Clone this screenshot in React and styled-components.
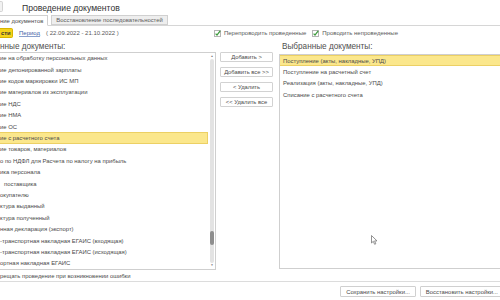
import React from 'react';
import styled, { createGlobalStyle } from 'styled-components';

const GlobalStyle = createGlobalStyle`
html, body {
  margin: 0;
  padding: 0;
  background: #ffffff;
}
#root {
  width: 500px;
  height: 300px;
  overflow: hidden;
}
* { box-sizing: border-box; }
`;

const leftDocs = [
  { text: 'ие на обработку персональных данных' },
  { text: 'ие депонированной зарплаты' },
  { text: 'ие кодов маркировки ИС МП' },
  { text: 'ие материалов из эксплуатации' },
  { text: 'ие НДС' },
  { text: 'ие НМА' },
  { text: 'ие ОС' },
  { text: 'ие с расчетного счета', selected: true },
  { text: 'ие товаров, материалов' },
  { text: 'о по НДФЛ для Расчета по налогу на прибыль' },
  { text: 'ика персонала' },
  { text: 'поставщика', indent: 4 },
  { text: 'окупателю' },
  { text: 'ктура выданный' },
  { text: 'ктура полученный' },
  { text: 'нная декларация (экспорт)' },
  { text: '-транспортная накладная ЕГАИС (входящая)' },
  { text: '-транспортная накладная ЕГАИС (исходящая)' },
  { text: 'ортная накладная ЕГАИС' },
];

const rightDocs = [
  { text: 'Поступление (акты, накладные, УПД)', selected: true },
  { text: 'Поступление на расчетный счет' },
  { text: 'Реализация (акты, накладные, УПД)' },
  { text: 'Списание с расчетного счета' },
];

const Check = () => (
  <CheckIcon width="7" height="7" viewBox="0 0 7 7">
    <rect x="0.5" y="0.5" width="6" height="6" fill="#fff" stroke="#b4b4b4" strokeWidth="1" />
    <path d="M1.6 3.6 L3 5.1 L6.2 0.9" fill="none" stroke="#3e9b3e" strokeWidth="1.3" />
  </CheckIcon>
);

const App = () => {
  return (
    <Page>
      <GlobalStyle />

      {/*Header*/}
      <Header>
        <BackStub />
        <Title>Проведение документов</Title>
      </Header>

      {/*Tabs*/}
      <Tabs>
        <Tab active>ние документов</Tab>
        <Tab>Восстановление последовательностей</Tab>
      </Tabs>

      {/*Toolbar*/}
      <Toolbar>
        <PostButton>сти</PostButton>
        <PeriodLink>Период</PeriodLink>
        <Dates>( 22.09.2022 - 21.10.2022 )</Dates>
        <Checks>
          <CheckLabel><Check />Перепроводить проведенные</CheckLabel>
          <CheckLabel><Check />Проводить непроведенные</CheckLabel>
        </Checks>
      </Toolbar>

      {/*Lists*/}
      <Main>
        <LeftCol>
          <Label>нные документы:</Label>
          <List side="left">
            <Rows>
              {leftDocs.map((d, i) => (
                <Row key={i} selected={d.selected} style={d.indent ? { paddingLeft: d.indent } : undefined}>
                  {d.text}
                </Row>
              ))}
            </Rows>
            <Scroll>
              <Arrow>▲</Arrow>
              <Track><Thumb /></Track>
              <Arrow>▼</Arrow>
            </Scroll>
          </List>
        </LeftCol>

        <MidCol>
          <SmallButton>Добавить &gt;</SmallButton>
          <SmallButton>Добавить все &gt;&gt;</SmallButton>
          <SmallButton>&lt; Удалить</SmallButton>
          <SmallButton>&lt;&lt; Удалить все</SmallButton>
        </MidCol>

        <RightCol>
          <Label pad>Выбранные документы:</Label>
          <List side="right">
            <Rows>
              {rightDocs.map((d, i) => (
                <Row key={i} selected={d.selected} right>{d.text}</Row>
              ))}
            </Rows>
          </List>
        </RightCol>
      </Main>

      <ErrorRow>рещать проведение при возникновении ошибки</ErrorRow>

      {/*Footer*/}
      <Footer>
        <FooterButton>Сохранить настройки...</FooterButton>
        <FooterButton>Восстановить настройки...</FooterButton>
      </Footer>

      <Cursor>
        <svg width="7" height="10" viewBox="0 0 7 10">
          <path d="M0.5 0.5 L0.5 8 L2.3 6.3 L3.6 9.3 L4.8 8.8 L3.6 5.9 L6 5.9 Z" fill="#ffffff" stroke="#777" strokeWidth="0.8" />
        </svg>
      </Cursor>
    </Page>
  );
};

export default App;

const Page = styled.div`
position: relative;
width: 500px;
height: 300px;
overflow: hidden;
display: flex;
flex-direction: column;
font-family: "Liberation Sans", Arial, sans-serif;
color: #4a4a4a;
background: #fff;
`;

//Header
const Header = styled.div`
height: 15px;
display: flex;
align-items: center;
`;

const BackStub = styled.div`
width: 3px;
height: 11px;
margin-top: -3px;
border: 1px solid #d4d4d4;
border-left: none;
border-radius: 0 2px 2px 0;
background: #f2f2f2;
`;

const Title = styled.div`
margin-left: 19px;
margin-top: 1px;
font-size: 8.6px;
color: #333;
`;

//Tabs
const Tabs = styled.div`
height: 11px;
display: flex;
align-items: flex-end;
gap: 3px;
border-bottom: 1px solid #d6d6d6;
`;

const Tab = styled.div`
height: ${({active}) => active ? '11px' : '10px'};
margin-bottom: ${({active}) => active ? '-1px' : '0'};
display: flex;
align-items: center;
font-size: 5.9px;
color: ${({active}) => active ? '#4a4a4a' : '#5a5a5a'};
background: ${({active}) => active ? '#fff' : '#eeeeee'};
border: 1px solid #d0d0d0;
border-bottom: ${({active}) => active ? '1px solid #fff' : '1px solid #d0d0d0'};
border-left: ${({active}) => active ? 'none' : '1px solid #d0d0d0'};
padding: ${({active}) => active ? '0 4px 0 0' : '0 4px'};
`;

//Toolbar
const Toolbar = styled.div`
margin-top: 2px;
height: 10px;
display: flex;
align-items: center;
font-size: 6px;
`;

const PostButton = styled.div`
width: 13px;
height: 10px;
display: flex;
align-items: center;
padding-left: 1px;
background: #f5d31c;
border: 1px solid #d8b400;
border-left: none;
border-radius: 0 2px 2px 0;
font-weight: bold;
font-size: 5.8px;
color: #333;
`;

const PeriodLink = styled.span`
margin-left: 6px;
color: #3f62a6;
text-decoration: underline;
text-decoration-color: #8aa0cc;
`;

const Dates = styled.span`
margin-left: 6px;
color: #5a5a5a;
`;

const Checks = styled.div`
margin-left: auto;
margin-right: 102px;
display: flex;
gap: 6px;
`;

const CheckLabel = styled.span`
display: flex;
align-items: center;
gap: 3px;
color: #5a5a5a;
`;

const CheckIcon = styled.svg`
display: block;
flex-shrink: 0;
`;

//Lists
const Main = styled.div`
height: 230px;
margin-top: 2px;
display: flex;
`;

const LeftCol = styled.div`
width: 216px;
display: flex;
flex-direction: column;
`;

const RightCol = styled.div`
flex: 1;
margin-left: 6px;
margin-right: -4px;
display: flex;
flex-direction: column;
`;

const Label = styled.div`
height: 14px;
padding-left: ${({pad}) => pad ? '3px' : '0'};
padding-top: 2px;
font-size: 8.2px;
color: #505050;
`;

const List = styled.div`
flex: 1;
display: flex;
border: 1px solid #cfcfcf;
border-left: ${({side}) => side === 'left' ? 'none' : '1px solid #cfcfcf'};
margin-bottom: ${({side}) => side === 'left' ? '0' : '1px'};
background: #fff;
`;

const Rows = styled.div`
flex: 1;
display: flex;
flex-direction: column;
`;

const Row = styled.div`
height: 11.4px;
flex-shrink: 0;
display: flex;
align-items: center;
padding-left: ${({right}) => right ? '3px' : '0'};
font-size: 5.9px;
white-space: nowrap;
color: #4a4a4a;
background: ${({selected}) => selected ? '#fbe78c' : 'transparent'};
border: 1px solid ${({selected}) => selected ? '#ecd064' : 'transparent'};
border-left: none;
margin-right: ${({right}) => right ? '0' : '1px'};
`;

const Scroll = styled.div`
width: 6px;
display: flex;
flex-direction: column;
align-items: center;
padding: 1px 0;
`;

const Arrow = styled.div`
font-size: 3px;
line-height: 5px;
height: 5px;
color: #777;
`;

const Track = styled.div`
flex: 1;
width: 4px;
background: #e3e3e3;
border-radius: 2px;
display: flex;
flex-direction: column;
justify-content: flex-end;
padding-bottom: 18px;
`;

const Thumb = styled.div`
height: 14px;
width: 4px;
background: #8e8e8e;
border-radius: 2px;
`;

//Middle buttons
const MidCol = styled.div`
width: 53px;
margin-left: 4px;
padding-top: 12px;
display: flex;
flex-direction: column;
gap: 5px;
`;

const SmallButton = styled.div`
height: 10px;
display: flex;
align-items: center;
justify-content: center;
border: 1px solid #d2d2d2;
border-radius: 1px;
background: #fff;
font-size: 5.8px;
color: #4a4a4a;
white-space: nowrap;
`;

const ErrorRow = styled.div`
height: 11px;
display: flex;
align-items: center;
font-size: 5.9px;
color: #4a4a4a;
border-bottom: 1px solid #dcdcdc;
margin-top: 1px;
`;

//Footer
const Footer = styled.div`
margin-top: 4px;
margin-right: -4px;
display: flex;
justify-content: flex-end;
gap: 4px;
`;

const FooterButton = styled.div`
height: 11px;
display: flex;
align-items: center;
padding: 0 5px;
border: 1px solid #d0d0d0;
border-radius: 1px;
background: #fff;
font-size: 5.9px;
color: #4a4a4a;
white-space: nowrap;
`;

const Cursor = styled.div`
position: absolute;
left: 371px;
top: 235px;
line-height: 0;
`;
